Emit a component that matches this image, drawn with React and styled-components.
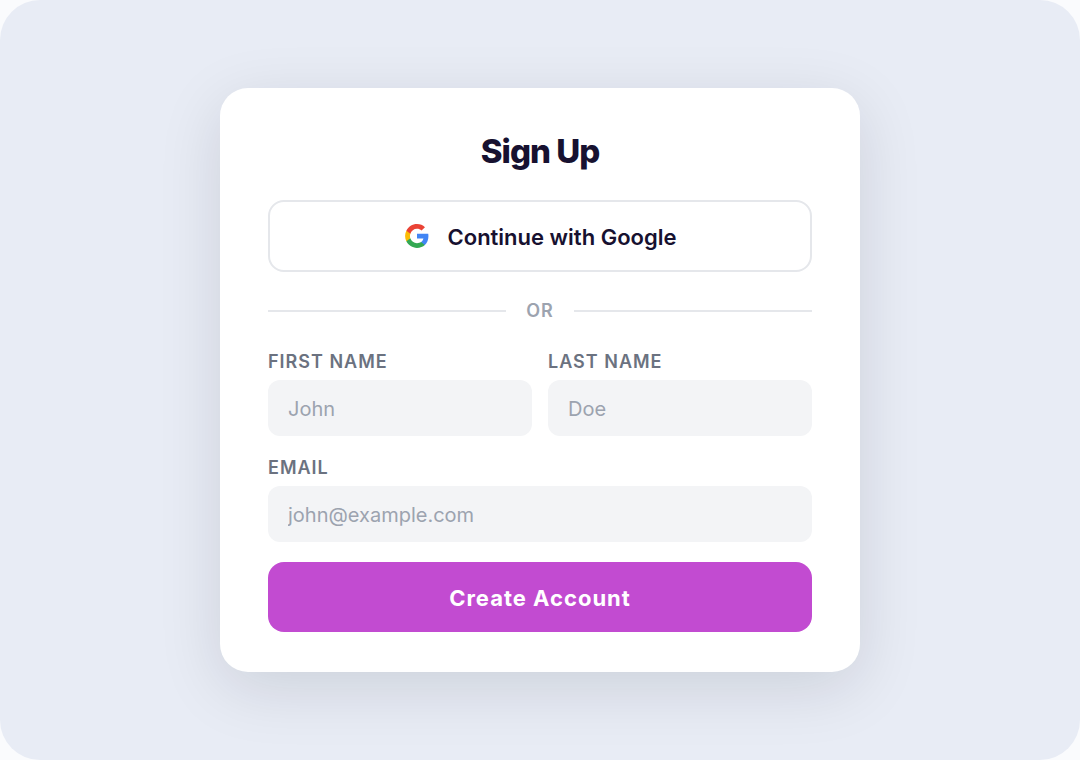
import React, { useState } from 'react';
import styled, { createGlobalStyle } from 'styled-components';

const GlobalStyle = createGlobalStyle`
  * {
    box-sizing: border-box;
  }

  body {
    margin: 0;
    background: #fafbfd;
    font-family: Inter, "Liberation Sans", sans-serif;
    color: #171130;
  }
`;

const Page = styled.main`
  min-height: 100vh;
  padding: 40px;
  display: flex;
  align-items: center;
  justify-content: center;
  background: #e8ecf5;
  border-radius: 40px;
`;

const Card = styled.form`
  width: 100%;
  max-width: 640px;
  padding: 40px 48px;
  display: flex;
  flex-direction: column;
  background: #fff;
  border-radius: 28px;
  box-shadow: 0 16px 64px rgba(0, 20, 30, 0.12);
`;

const Title = styled.h1`
  margin: 0 0 26px;
  font-size: 33px;
  line-height: 46px;
  font-weight: 800;
  letter-spacing: -1px;
  text-align: center;
`;

const Button = styled.button`
  height: ${props => props.$primary ? '70px' : '72px'};
  padding: 0 20px;
  display: flex;
  align-items: center;
  justify-content: center;
  gap: 18px;
  border: ${props => props.$primary ? 'none' : '2px solid #e5e7eb'};
  border-radius: 16px;
  background: ${props => props.$primary ? '#c24bd1' : '#fff'};
  color: ${props => props.$primary ? '#fff' : '#171130'};
  font-family: inherit;
  font-size: 22px;
  line-height: 28px;
  font-weight: ${props => props.$primary ? '700' : '600'};
  letter-spacing: ${props => props.$primary ? '1px' : 'normal'};
  cursor: pointer;
`;

const ButtonText = styled.span`
  padding-top: 2px;
`;

const Divider = styled.div`
  margin: 28px 0;
  display: flex;
  align-items: center;
  gap: 20px;
  color: #9ca3af;
  font-size: 18px;
  line-height: 22px;
  font-weight: 600;
  letter-spacing: 1px;

  &::before,
  &::after {
    content: '';
    flex: 1;
    height: 2px;
    background: #e5e7eb;
  }
`;

const Fields = styled.div`
  margin-bottom: 20px;
  display: grid;
  grid-template-columns: 1fr 1fr;
  gap: 20px 16px;
`;

const Field = styled.div`
  min-width: 0;
  grid-column: ${props => props.$wide ? '1 / -1' : 'auto'};
  display: flex;
  flex-direction: column;
  gap: 6px;
`;

const Label = styled.label`
  color: #6b7280;
  font-size: 18px;
  line-height: 24px;
  font-weight: 600;
  letter-spacing: 1px;
  text-transform: uppercase;
`;

const Input = styled.input`
  width: 100%;
  height: 56px;
  padding: 2px 20px 0;
  border: none;
  border-radius: 12px;
  background: #f3f4f6;
  color: #171130;
  font-family: inherit;
  font-size: 20px;

  &::placeholder {
    color: #9ca3af;
    opacity: 1;
  }
`;

const GoogleLogo = () => (
  <svg width="26" height="26" viewBox="0 0 24 24" aria-hidden="true">
    <path fill="#4285F4" d="M22.56 12.25c0-.78-.07-1.53-.2-2.25H12v4.26h5.92c-.26 1.37-1.04 2.53-2.21 3.31v2.77h3.57c2.08-1.92 3.28-4.74 3.28-8.09z" />
    <path fill="#34A853" d="M12 23c2.97 0 5.46-.98 7.28-2.66l-3.57-2.77c-.98.66-2.23 1.06-3.71 1.06-2.86 0-5.29-1.93-6.16-4.53H2.18v2.84C3.99 20.53 7.7 23 12 23z" />
    <path fill="#FBBC05" d="M5.84 14.09c-.22-.66-.35-1.36-.35-2.09s.13-1.43.35-2.09V7.07H2.18C1.43 8.55 1 10.22 1 12s.43 3.45 1.18 4.93l3.66-2.84z" />
    <path fill="#EA4335" d="M12 5.38c1.62 0 3.06.56 4.21 1.64l3.15-3.15C17.45 2.09 14.97 1 12 1 7.7 1 3.99 3.47 2.18 7.07l3.66 2.84c.87-2.6 3.3-4.53 6.16-4.53z" />
  </svg>
);

const App = () => {
  const [values, setValues] = useState({ firstName: '', lastName: '', email: '' });

  const handleChange = (e) => {
    setValues({ ...values, [e.target.name]: e.target.value });
  };

  return (
    <>
      <GlobalStyle />
      <Page>
        <Card onSubmit={(e) => e.preventDefault()}>
          <Title>Sign Up</Title>
          <Button type="button">
            <GoogleLogo />
            <ButtonText>Continue with Google</ButtonText>
          </Button>
          <Divider>OR</Divider>
          <Fields>
            <Field>
              <Label htmlFor="firstName">First Name</Label>
              <Input id="firstName" name="firstName" placeholder="John" value={values.firstName} onChange={handleChange} />
            </Field>
            <Field>
              <Label htmlFor="lastName">Last Name</Label>
              <Input id="lastName" name="lastName" placeholder="Doe" value={values.lastName} onChange={handleChange} />
            </Field>
            <Field $wide>
              <Label htmlFor="email">Email</Label>
              <Input id="email" name="email" type="email" placeholder="john@example.com" value={values.email} onChange={handleChange} />
            </Field>
          </Fields>
          <Button type="submit" $primary>
            <ButtonText>Create Account</ButtonText>
          </Button>
        </Card>
      </Page>
    </>
  );
};

export default App;
